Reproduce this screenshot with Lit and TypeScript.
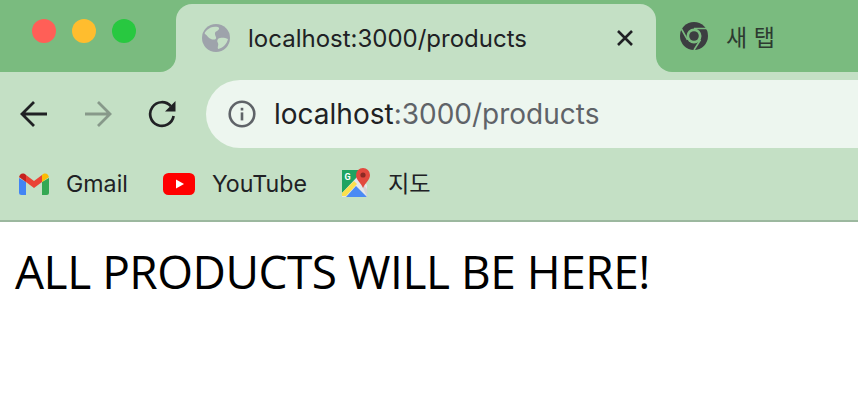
import { LitElement, html, css, svg } from "lit";
import { customElement } from "lit/decorators.js";

const globe = svg`<svg width="30" height="30" viewBox="0 0 30 30"><circle cx="15" cy="15" r="14" fill="#9ea3ab"/><path d="M6 7c3-3 7-4 11-3 2 1 1 3-1 4-3 1-2 4-1 6 1 3-3 3-5 2-3-1-4-4-6-5-1-1 1-3 2-4zM17 16c3-2 7-1 10 0-1 5-5 9-10 10-1-2 1-4 0-6-1-1-1-3 0-4z" fill="#c5e0c6" /></svg>`;
const chromeIcon = svg`<svg width="28" height="28" viewBox="0 0 28 28"><circle cx="14" cy="14" r="14" fill="#3c3d41"/><circle cx="14" cy="14" r="7.500" fill="#7abb7f"/><circle cx="14" cy="14" r="4.800" fill="#3c3d41"/><path d="M14 6.500h13M20.500 17.800 14 28M7.500 17.800 1.500 7" stroke="#7abb7f" stroke-width="1.600" fill="none"/></svg>`;
const close = svg`<svg width="18" height="18" viewBox="0 0 18 18"><path d="M2 2l14 14M16 2 2 16" stroke="#202124" stroke-width="2.600" fill="none"/></svg>`;
const arrow = (color: string, flip: boolean) => svg`<svg width="28" height="26" viewBox="0 0 28 26"><path d="${flip ? "M1 13h25M14 1 26 13 14 25" : "M27 13H2M14 1 2 13l12 12"}" stroke="${color}" stroke-width="2.800" fill="none"/></svg>`;
const reload = svg`<svg width="28" height="28" viewBox="0 0 28 28"><path d="M22.800 6.200A11.800 11.800 0 1 0 25.600 16" stroke="#202124" stroke-width="2.700" fill="none"/><path d="M27.500 1V11.500H17z" fill="#202124"/></svg>`;
const info = svg`<svg width="28" height="28" viewBox="0 0 28 28"><circle cx="14" cy="14" r="12.300" stroke="#5f6368" stroke-width="2.600" fill="none"/><rect x="12.700" y="12.400" width="2.600" height="8" fill="#5f6368"/><rect x="12.700" y="7.800" width="2.600" height="2.700" fill="#5f6368"/></svg>`;
const gmail = svg`<svg width="30" height="22" viewBox="0 0 30 22"><path d="M0 5v14.500A2.500 2.500 0 0 0 2.500 22H7V9z" fill="#4285f4"/><path d="M30 5v14.500a2.500 2.500 0 0 1-2.500 2.500H23V9z" fill="#34a853"/><path d="M7 9 15 15l8-6V2l-8 6-8-6z" fill="#ea4335"/><path d="M0 5C0 1 4-1 7 2v7L0 4z" fill="#c5221f"/><path d="M30 5c0-4-4-6-7-3v7l7-5z" fill="#fbbc04"/></svg>`;
const youtube = svg`<svg width="32" height="22" viewBox="0 0 32 22"><rect width="32" height="22" rx="5.500" fill="#f00"/><path d="M13 6.500v9l8-4.500z" fill="#fff"/></svg>`;
const maps = svg`<svg width="30" height="30" viewBox="0 0 30 30"><path d="M1 3h20v27H1z" fill="#1ea362"/><path d="M1 26 17 9l9 9v12H1z" fill="#e5e7e9"/><path d="M1 26 13 14l3 3L5 29H1z" fill="#fbe04e"/><path d="M5 30 15 19l11 11z" fill="#4a8af4"/><path d="M19 14l7 8v8z" fill="#d4d4d4"/><path d="M22 1a7 7 0 0 1 7 7c0 5-5 8-7 13-2-5-7-8-7-13a7 7 0 0 1 7-7z" fill="#e2493e"/><circle cx="22" cy="8" r="2.600" fill="#8c2a24"/><text x="3.500" y="13" font-size="9" font-weight="700" fill="#fff" font-family="Roboto, sans-serif">G</text></svg>`;

@customElement("app-root")
export class AppRoot extends LitElement {
  static styles = css`
    :host { display: block; width: 858px; height: 400px; overflow: hidden; background: #fff; font-family: "Inter", "Noto Sans CJK KR", sans-serif; color: #202124; }
    .chrome { background: #c4e0c5; border-bottom: 2px solid #9cb89f; height: 220px; box-sizing: content-box; }
    .strip { display: flex; height: 72px; }
    .dots { width: 176px; flex: none; background: #7abb7f; border-bottom-right-radius: 16px; display: flex; gap: 16px; padding: 19px 0 0 32px; box-sizing: border-box; }
    .dot { width: 24px; height: 24px; border-radius: 50%; }
    .tab { width: 480px; flex: none; background: #7abb7f; }
    .tabin { height: 68px; margin-top: 4px; background: #c4e0c5; border-radius: 16px 16px 0 0; display: flex; align-items: center; padding: 0 22px 0 25px; box-sizing: border-box; gap: 17px; font-size: 24px; }
    .tabin .t { flex: 1; }
    .tabin svg { display: block; }
    .rest { flex: 1; background: #7abb7f; border-bottom-left-radius: 16px; display: flex; align-items: center; padding: 0 0 0 24px; gap: 18px; font-size: 23px; color: #2d3a30; }
    .nav { height: 76px; padding-top: 8px; display: flex; align-items: flex-start; box-sizing: border-box; }
    .btns { display: flex; align-items: center; height: 68px; padding-left: 20px; gap: 36px; width: 206px; box-sizing: border-box; flex: none; }
    .omni { flex: 1; height: 68px; background: #edf6ef; border-radius: 34px 0 0 34px; display: flex; align-items: center; padding-left: 22px; gap: 18px; font-size: 28px; }
    .omni .dim { color: #5f6368; }
    .marks { display: flex; align-items: center; height: 71px; padding-left: 19px; font-size: 23.2px; }
    .mark { display: flex; align-items: center; gap: 17px; margin-right: 35px; }
    .mark.map { margin-left: -1px; }
    .mark.map svg, .mark.map span { margin-bottom: 3px; }
    h1 { margin: 0; padding: 21px 0 0 15px; font: 400 46px/56px "Open Sans", sans-serif; letter-spacing: -0.48px; color: #000; }
  `;

  render() {
    return html`
      <div class="chrome">
        <div class="strip">
          <div class="dots">
            <div class="dot" style="background:#ff5f57"></div>
            <div class="dot" style="background:#ffbd2e"></div>
            <div class="dot" style="background:#28c840"></div>
          </div>
          <div class="tab">
            <div class="tabin">${globe}<span class="t">localhost:3000/products</span>${close}</div>
          </div>
          <div class="rest">${chromeIcon}<span>새 탭</span></div>
        </div>
        <div class="nav">
          <div class="btns">${arrow("#202124", false)}${arrow("#87998a", true)}${reload}</div>
          <div class="omni">${info}<span>localhost<span class="dim">:3000/products</span></span></div>
        </div>
        <div class="marks">
          <div class="mark">${gmail}<span>Gmail</span></div>
          <div class="mark">${youtube}<span>YouTube</span></div>
          <div class="mark map">${maps}<span>지도</span></div>
        </div>
      </div>
      <h1>ALL PRODUCTS WILL BE HERE!</h1>
    `;
  }
}
